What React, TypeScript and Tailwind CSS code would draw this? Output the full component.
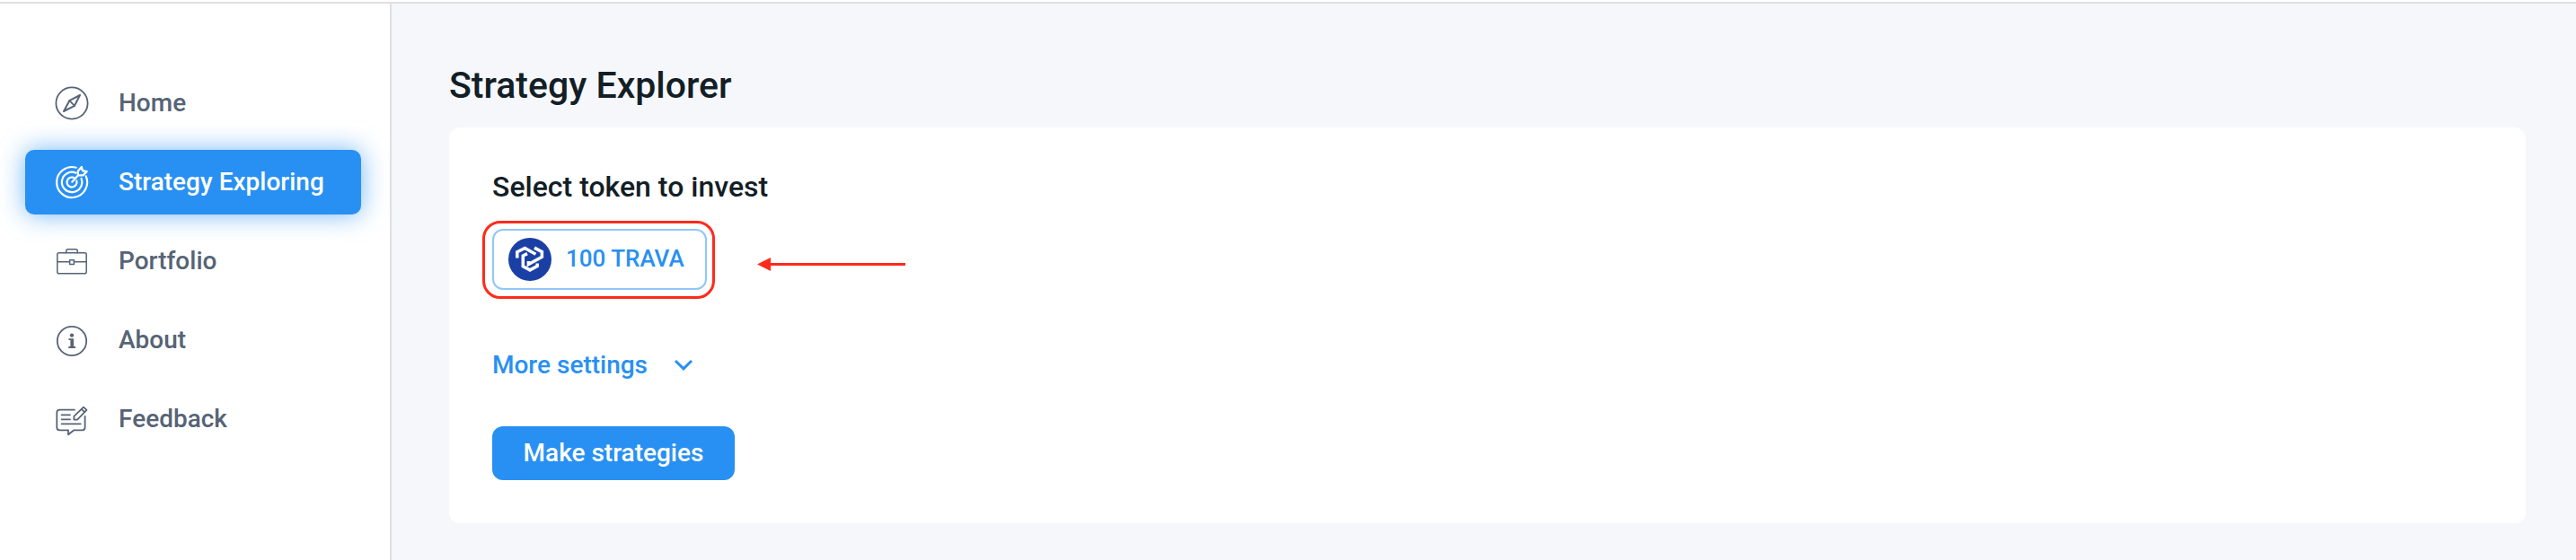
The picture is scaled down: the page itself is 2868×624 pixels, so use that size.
import type { ReactNode } from "react";

function Icon({ children, width = 2 }: { children: ReactNode; width?: number }) {
  return (
    <svg
      viewBox="0 0 40 40"
      className="size-10 shrink-0"
      fill="none"
      stroke="currentColor"
      strokeWidth={width}
      strokeLinecap="round"
      strokeLinejoin="round"
      aria-hidden="true"
    >
      {children}
    </svg>
  );
}

const CompassIcon = () => (
  <Icon width={1.8}>
    <circle cx="20" cy="20" r="17.6" />
    <path d="M29 11 17.3 17.2 11 29l12-6.2z" strokeWidth="2" />
    <path d="m17.3 17.2 5.7 5.6" />
  </Icon>
);

const TargetIcon = () => (
  <Icon width={2.2}>
    <path d="M35.7 13.3A17 17 0 1 1 24.7 3.7" />
    <path d="M30.5 15.9A11.2 11.2 0 1 1 24.5 9.7" />
    <path d="M25.3 18.5A5.5 5.5 0 1 1 22 14.9" />
    <path d="M20.3 19.7 27 12.3M27 12.3l-.3-4.6L30.9 3l1 4.2 4.8.9-4.4 4.3z" />
  </Icon>
);

const BriefcaseIcon = () => (
  <Icon width={1.5}>
    <rect x="3.8" y="10.8" width="32.4" height="23" rx="1.8" />
    <path d="M13.7 10.7V8.8a2 2 0 0 1 2-2h8.6a2 2 0 0 1 2 2v1.9M4 20.7h13.4M22.4 20.7H36" />
    <rect x="17.6" y="18.8" width="4.8" height="4.8" />
  </Icon>
);

const InfoIcon = () => (
  <Icon width={1.8}>
    <circle cx="20" cy="21" r="16.2" />
    <circle cx="20" cy="14.6" r="2.2" fill="currentColor" stroke="none" />
    <path d="M16.4 18.2H22v8.9h2v1.8h-7.7v-1.8h2.1V20h-2z" fill="currentColor" stroke="none" />
  </Icon>
);

const FeedbackIcon = () => (
  <Icon width={1.8}>
    <path d="M23 9.7H6.3a3 3 0 0 0-3 3v16.6a3 3 0 0 0 3 3H16v5l6.4-5h9.2a3 3 0 0 0 3-3V17" />
    <path d="M8.6 15.3H18M8.6 20.3H18M8.6 25.3h21.2" />
    <path d="M22.4 20.6v-3.8L33 6.6l3.5 3.3-10.4 10.7zM30.6 8.8l3.6 3.4" />
  </Icon>
);

function TokenLogo() {
  return (
    <svg viewBox="0 0 48 48" className="size-12 shrink-0" aria-hidden="true">
      <circle cx="24" cy="24" r="24" fill="#1b40a5" />
      <g fill="none" stroke="#fff" strokeWidth="3.5">
        <path d="M9.8 22.6v-6.8l8.6-4.4 12 6.8" />
        <path d="m29 11.1 8.4 4.5v5.6l-15 8.4v-3.6" />
        <path d="M21 17.6 16.3 20v11.8l7.7 4.1 8.2-4.4v-3" />
      </g>
    </svg>
  );
}

const navItems = [
  { label: "Home", icon: <CompassIcon /> },
  { label: "Strategy Exploring", icon: <TargetIcon />, active: true },
  { label: "Portfolio", icon: <BriefcaseIcon /> },
  { label: "About", icon: <InfoIcon /> },
  { label: "Feedback", icon: <FeedbackIcon /> },
];

export default function App() {
  return (
    <div className="flex min-h-screen flex-col bg-[#f5f7fb] font-['Roboto',sans-serif] font-medium">
      <header className="h-1 border-b-2 border-[#e0e0e0] bg-white" />
      <div className="flex grow">
        <aside className="w-[436px] shrink-0 border-r-2 border-[#e0e0e0] bg-white pt-[75px] pr-8 pl-7">
          <nav className="flex flex-col gap-4">
            {navItems.map((item) => (
              <a
                key={item.label}
                href="#"
                aria-current={item.active ? "page" : undefined}
                className={
                  item.active
                    ? "flex h-[72px] items-center gap-8 rounded-[10px] bg-[#2890f2] pl-8 text-white shadow-[0_0_28px_rgba(40,144,242,0.65)]"
                    : "flex h-[72px] items-center gap-8 rounded-[10px] pl-8 text-[#566476]"
                }
              >
                {item.icon}
                <span className="text-[28px] leading-8 whitespace-nowrap">{item.label}</span>
              </a>
            ))}
          </nav>
        </aside>

        <main className="min-w-0 grow pt-[67px] pr-14 pb-10 pl-16">
          <h1 className="text-[41px] leading-[48px] text-[#131e26]">Strategy Explorer</h1>
          <section className="mt-[23px] flex flex-col items-start rounded-xl bg-white px-12 pt-[46px] pb-12">
            <h2 className="text-[32px] leading-10 text-[#131e26]">Select token to invest</h2>
            <div className="relative mt-[27px]">
              <button
                type="button"
                className="flex h-[68px] w-[239px] items-center gap-4 rounded-xl border-2 border-[#90c7f9] pl-4 text-[#2890f2]"
              >
                <TokenLogo />
                <span className="pb-0.5 text-[26px] leading-8 whitespace-nowrap">100 TRAVA</span>
              </button>
              <div className="pointer-events-none absolute -top-[9px] -right-[9px] -bottom-[10px] -left-[11px] rounded-[20px] border-3 border-[#ff2a1c]" />
              <svg
                viewBox="0 0 166 16"
                className="pointer-events-none absolute top-8 left-[295px] h-4 w-[166px]"
                fill="#ff2a1c"
                aria-hidden="true"
              >
                <path d="M0 7.5 15 0v6h150v3H15v6z" />
              </svg>
            </div>
            <button
              type="button"
              className="mt-[68px] flex items-center gap-7 text-[28px] leading-8 text-[#2890f2]"
            >
              More settings
              <svg viewBox="0 0 24 24" className="size-6" fill="none" stroke="currentColor" strokeWidth="3" aria-hidden="true">
                <path d="m3 7 9 8.8L21 7" />
              </svg>
            </button>
            <button
              type="button"
              className="mt-[52px] h-[60px] w-[270px] rounded-xl bg-[#2890f2] text-[28px] leading-8 text-white"
            >
              Make strategies
            </button>
          </section>
        </main>
      </div>
    </div>
  );
}
